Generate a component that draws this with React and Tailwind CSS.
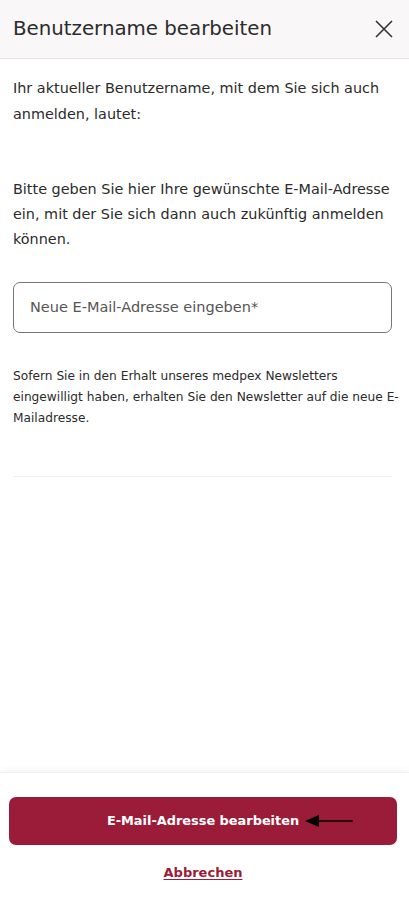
import React from "react";

export default function App() {
  const font = { fontFamily: '"DejaVu Sans", "Noto Sans", sans-serif' };
  return (
    <div className="w-[409px] h-[900px] bg-white flex flex-col text-[#2b2b2b]" style={font}>
      <div className="h-[59px] shrink-0 bg-[#f9f7f7] border-b border-[#e6e3e3] flex items-center justify-between pl-[13px] pr-[15px]">
        <h1 className="text-[19.8px] font-normal text-[#2b2b2b]">Benutzername bearbeiten</h1>
        <svg width="20" height="20" viewBox="0 0 20 20" className="text-[#333]">
          <path d="M2 2 L18 18 M18 2 L2 18" stroke="currentColor" strokeWidth="1.6" fill="none" />
        </svg>
      </div>
      <div className="flex-1 px-[13px] pt-[16px]">
        <p className="text-[14.4px] leading-[26px]">
          Ihr aktueller Benutzername, mit dem Sie sich auch anmelden, lautet:
        </p>
        <p className="text-[14.4px] leading-[25px] mt-[50px]">
          Bitte geben Sie hier Ihre gewünschte E-Mail-Adresse ein, mit der Sie sich dann auch zukünftig anmelden können.
        </p>
        <div className="mt-[30px] mr-[4px] h-[51px] border border-[#767676] rounded-[7px] flex items-center px-[16px]">
          <span className="text-[14.5px] text-[#555]">Neue E-Mail-Adresse eingeben*</span>
        </div>
        <p className="text-[12.2px] leading-[21px] mt-[33px] mr-[-8px] text-[#2b2b2b]">
          Sofern Sie in den Erhalt unseres medpex Newsletters eingewilligt haben, erhalten Sie den Newsletter auf die neue E-Mailadresse.
        </p>
        <div className="mt-[47px] mr-[4px] border-t border-[#eeeeee]" />
      </div>
      <div className="shrink-0 h-[128px] shadow-[0_-3px_6px_rgba(0,0,0,0.04)] border-t border-[#f0f0f0] flex flex-col items-center pt-[24px] pl-[9px] pr-[12px]">
        <div className="relative w-full h-[48px] rounded-[7px] bg-[#9b1c38] flex items-center justify-center">
          <span className="text-white font-bold text-[12.9px]">E-Mail-Adresse bearbeiten</span>
          <svg className="absolute left-[296px] top-[16px]" width="50" height="16" viewBox="0 0 50 16">
            <path d="M0 8 L14 2 L14 14 Z" fill="#000" />
            <path d="M12 8 L48 8" stroke="#000" strokeWidth="1.6" />
          </svg>
        </div>
        <a href="#" className="mt-[18px] text-[#9b1c38] font-bold text-[13px] underline underline-offset-2">Abbrechen</a>
      </div>
    </div>
  );
}
